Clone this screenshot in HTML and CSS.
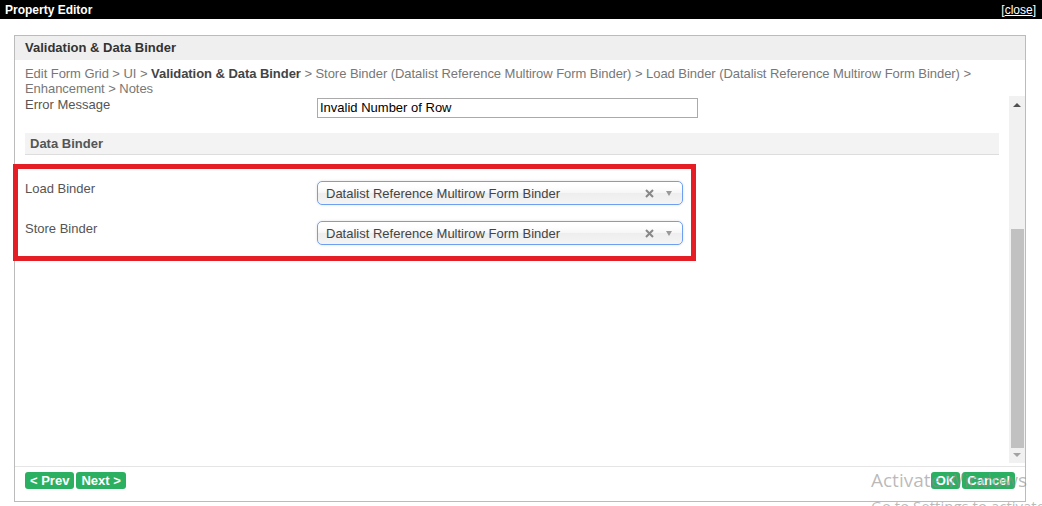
FILE: index.html
```html
<!DOCTYPE html>
<html>
<head>
<meta charset="utf-8">
<link rel="stylesheet" href="styles.css">
</head>
<body>
<div class="titlebar">
  <span class="title">Property Editor</span>
  <span class="close">[<u>close</u>]</span>
</div>
<div class="panel">
  <div class="panel-header">Validation &amp; Data Binder</div>
  <div class="breadcrumb">Edit Form Grid &gt; UI &gt; <b>Validation &amp; Data Binder</b> &gt; Store Binder (Datalist Reference Multirow Form Binder) &gt; Load Binder (Datalist Reference Multirow Form Binder) &gt; Enhancement &gt; Notes</div>
  <div class="body">
    <div class="content">
      <div class="row row-error">
        <label class="label">Error Message</label>
        <div class="input">Invalid Number of Row</div>
      </div>
      <div class="section">Data Binder</div>
      <div class="row row-load">
        <label class="label">Load Binder</label>
        <div class="select"><span class="sel-text">Datalist Reference Multirow Form Binder</span><svg class="sel-x" width="9" height="9" viewBox="0 0 9 9"><path d="M1 1L8 8M8 1L1 8" stroke="#888" stroke-width="2"/></svg><span class="sel-arrow"></span></div>
      </div>
      <div class="row row-store">
        <label class="label">Store Binder</label>
        <div class="select"><span class="sel-text">Datalist Reference Multirow Form Binder</span><svg class="sel-x" width="9" height="9" viewBox="0 0 9 9"><path d="M1 1L8 8M8 1L1 8" stroke="#888" stroke-width="2"/></svg><span class="sel-arrow"></span></div>
      </div>
    </div>
    <div class="scrollbar">
      <div class="arrow-up"></div>
      <div class="track"><div class="thumb"></div></div>
      <div class="arrow-down"></div>
    </div>
  </div>
  <div class="footer">
    <div class="btns">
      <span class="btn">&lt; Prev</span>
      <span class="btn">Next &gt;</span>
    </div>
    <div class="btns">
      <span class="btn">OK</span>
      <span class="btn">Cancel</span>
    </div>
  </div>
</div>
<div class="highlight"></div>
<div class="watermark">
  <div class="wm1">Activate Windows</div>
  <div class="wm2">Go to Settings to activate</div>
</div>
</body>
</html>
```

FILE: styles.css
```css
html, body {
  margin: 0;
  padding: 0;
  background: #fff;
  font-family: "Liberation Sans", Arial, sans-serif;
  overflow: hidden;
  height: 506px;
}
.titlebar {
  height: 19px;
  background: #000;
  color: #fff;
  display: flex;
  justify-content: space-between;
  align-items: center;
  padding: 0 6px 0 5px;
  font-size: 12px;
}
.title { font-weight: bold; }
.close { font-size: 12px; }
.panel {
  margin: 16px 16px 0 14px;
  height: 467px;
  border: 1px solid #bbb;
  box-sizing: border-box;
  display: flex;
  flex-direction: column;
}
.panel-header {
  height: 24px;
  line-height: 24px;
  background: #efefef;
  padding-left: 10px;
  font-size: 13px;
  font-weight: bold;
  color: #333;
}
.breadcrumb {
  padding: 6px 40px 0 10px;
  font-size: 13px;
  line-height: 15px;
  color: #777;
  letter-spacing: -0.05px;
}
.breadcrumb b { color: #444; }
.body {
  display: flex;
  height: 370px;
}
.content {
  flex: 1;
  padding: 0 10px;
  overflow: hidden;
}
.row {
  display: flex;
  align-items: flex-start;
}
.label {
  width: 292px;
  flex: none;
  font-size: 13px;
  line-height: 15px;
  color: #555;
}
.row-error { margin-top: 1px; }
.input {
  margin-top: 1px;
  width: 381px;
  height: 20px;
  box-sizing: border-box;
  border: 1px solid #aaa;
  font-size: 13px;
  line-height: 18px;
  padding: 0 2px;
  color: #000;
}
.section {
  margin-top: 15px;
  height: 21px;
  line-height: 21px;
  background: #f3f3f3;
  border-bottom: 1px solid #ddd;
  padding-left: 5px;
  font-size: 13px;
  font-weight: bold;
  color: #555;
}
.row-load { margin-top: 26px; }
.row-store { margin-top: 16px; }
.select {
  width: 366px;
  height: 24px;
  box-sizing: border-box;
  border: 1px solid #6f9ff0;
  border-radius: 5px;
  background: linear-gradient(#fff 20%, #f6f6f6 50%, #eee 52%, #f4f4f4 100%);
  box-shadow: 0 0 3px rgba(0,0,0,0.12);
  display: flex;
  align-items: center;
  padding-left: 8px;
  font-size: 13px;
  color: #444;
}
.sel-text { flex: 1; }
.sel-x {
  margin-right: 12px;
  flex: none;
}
.sel-arrow {
  width: 0;
  height: 0;
  border-left: 3.5px solid transparent;
  border-right: 3.5px solid transparent;
  border-top: 5px solid #999;
  margin-right: 10px;
}
.scrollbar {
  width: 16px;
  height: 367px;
  background: #f1f1f1;
  display: flex;
  flex-direction: column;
  align-items: center;
}
.arrow-up {
  margin-top: 7px;
  width: 0;
  height: 0;
  border-left: 4px solid transparent;
  border-right: 4px solid transparent;
  border-bottom: 4px solid #505050;
}
.track {
  flex: 1;
  width: 100%;
  display: flex;
  flex-direction: column;
  justify-content: flex-end;
  padding: 0 1px 0 2px;
  box-sizing: border-box;
}
.thumb {
  height: 219px;
  background: #c1c1c1;
  margin-bottom: 5px;
}
.arrow-down {
  margin-bottom: 6px;
  width: 0;
  height: 0;
  border-left: 4px solid transparent;
  border-right: 4px solid transparent;
  border-top: 4px solid #a3a3a3;
}
.footer {
  border-top: 1px solid #e5e5e5;
  display: flex;
  justify-content: space-between;
  padding: 5px 10px 0 10px;
}
.btns {
  display: flex;
  gap: 2px;
}
.btn {
  background: #2bb062;
  color: #fff;
  font-size: 13px;
  font-weight: bold;
  height: 17px;
  line-height: 17px;
  padding: 0 5px;
  border-radius: 3px;
}
.highlight {
  position: absolute;
  left: 13px;
  top: 164px;
  width: 683px;
  height: 97px;
  border: 5px solid #e51d25;
  box-sizing: border-box;
}
.watermark {
  position: absolute;
  left: 871px;
  top: 468px;
  color: rgba(140,140,140,0.6);
  font-family: "Open Sans", "Noto Sans", sans-serif;
  white-space: nowrap;
}
.wm1 { font-size: 19px; line-height: 24px; }
.wm2 { font-size: 15px; line-height: 20px; margin-top: 4px; }
```
